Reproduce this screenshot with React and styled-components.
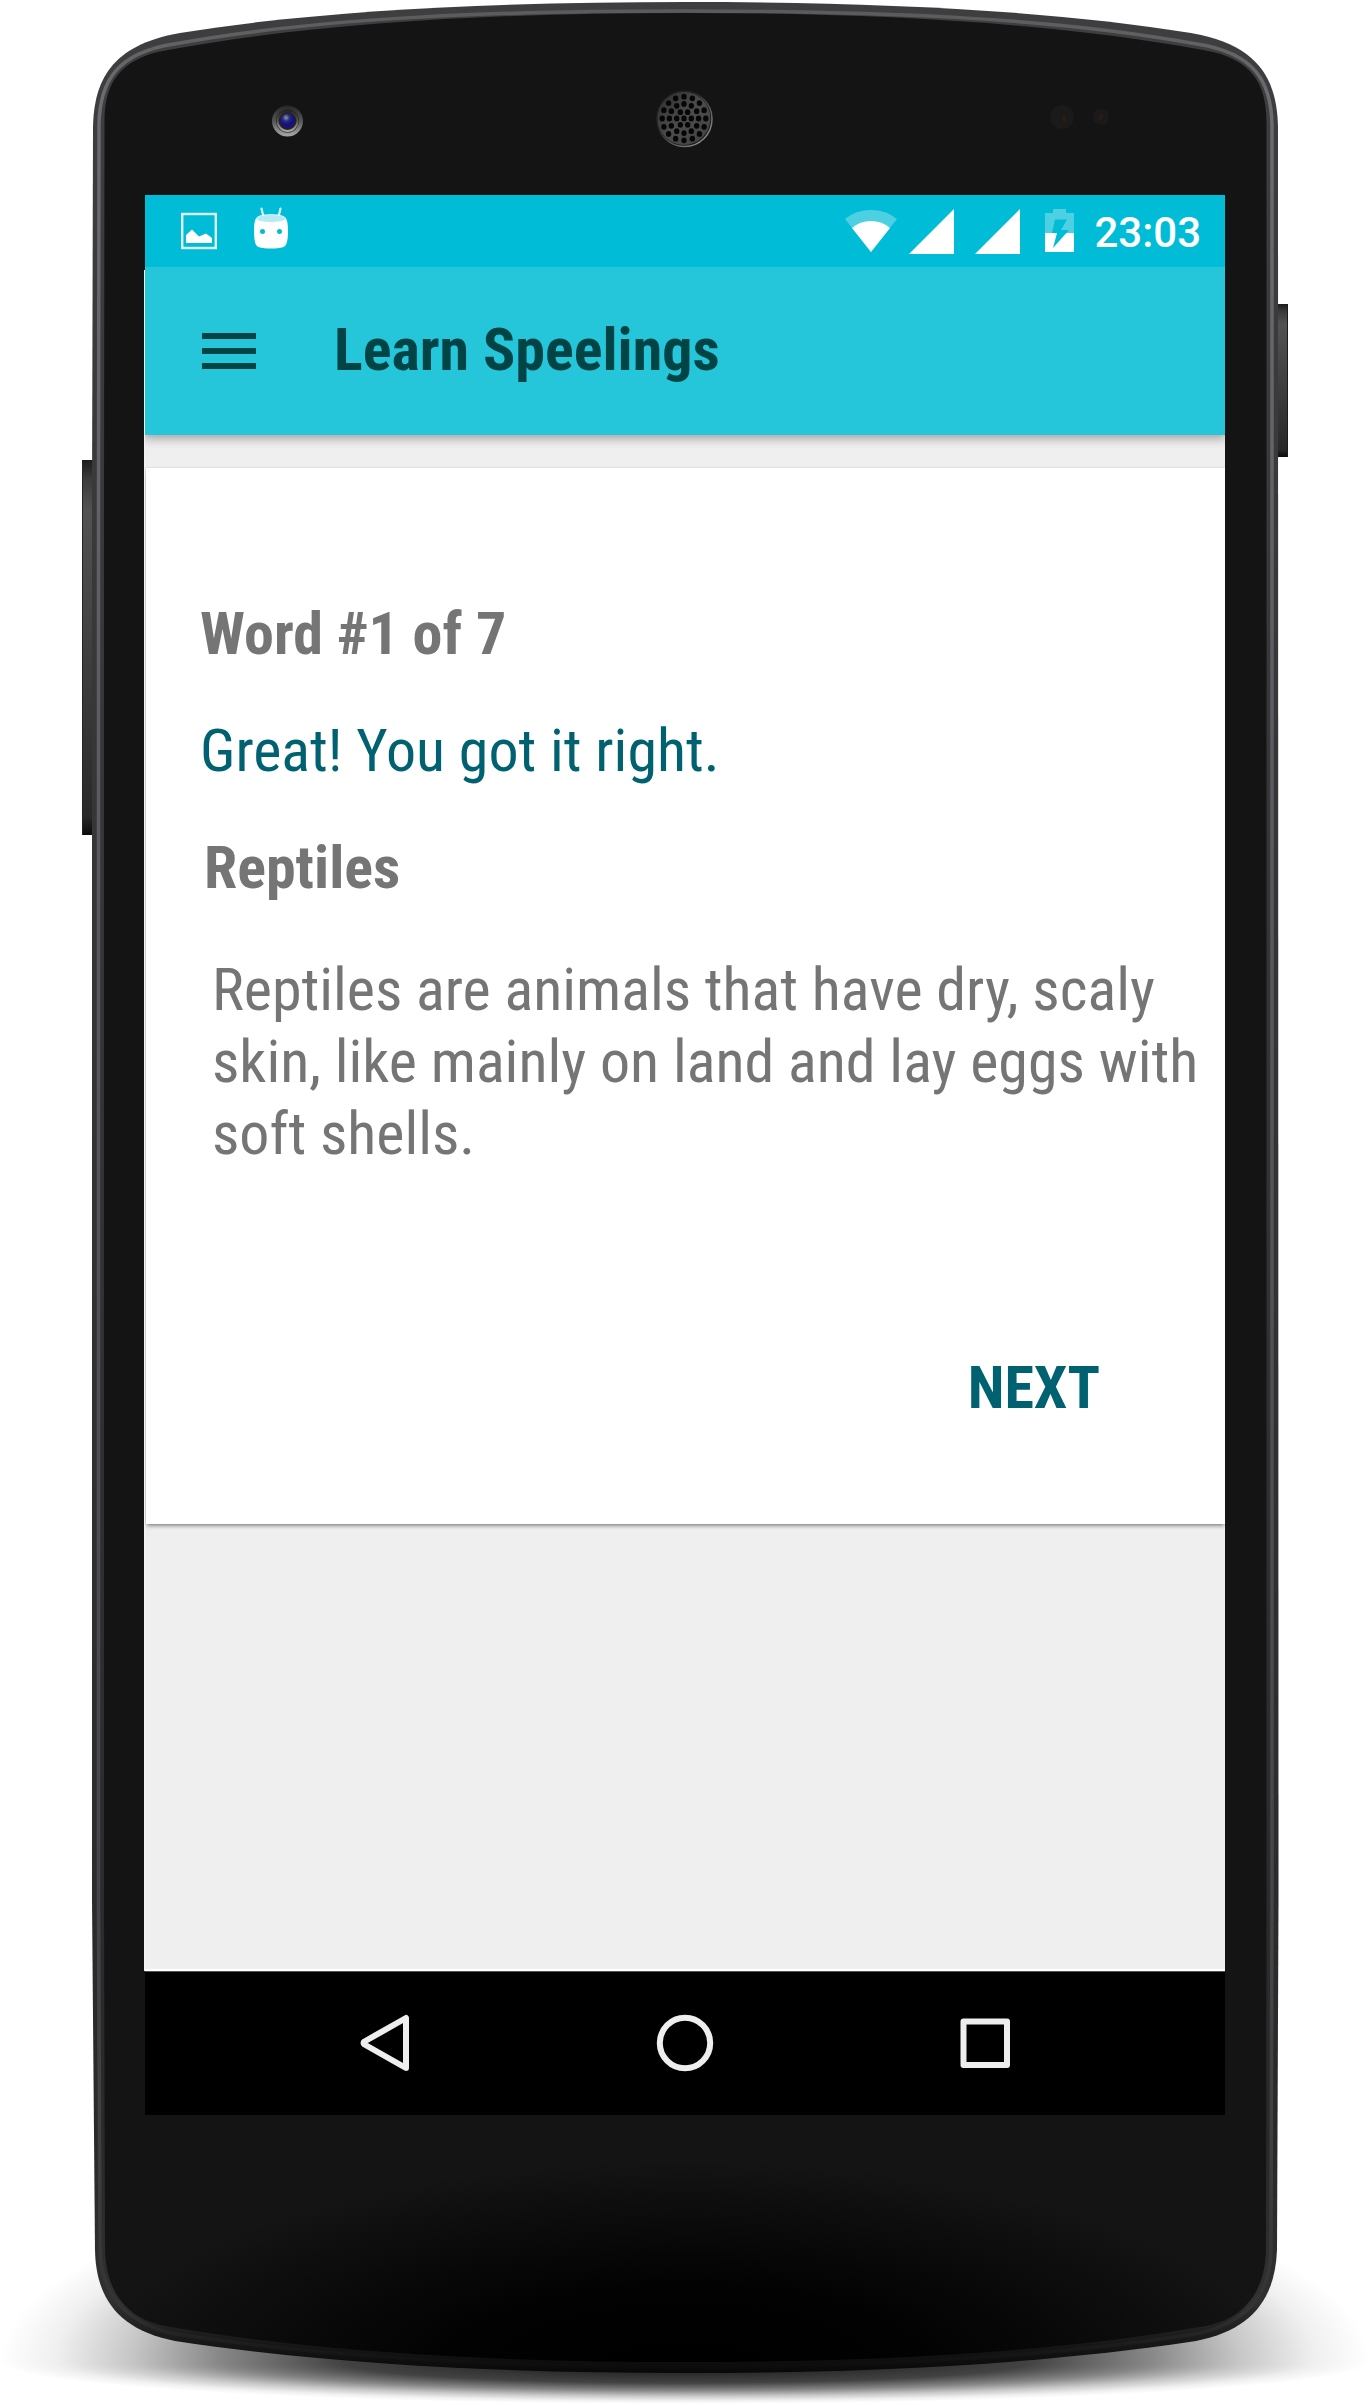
import React from "react";
import styled, { createGlobalStyle } from "styled-components";

const GlobalStyle = createGlobalStyle`
  *, *::before, *::after { box-sizing: border-box; }
  body { margin: 0; background: #fff; }
`;

const condensed = `"Roboto Condensed", Roboto, "Liberation Sans", sans-serif`;

const Stage = styled.div`
  position: relative;
  width: 1370px;
  height: 2405px;
  padding: 195px 145px 290px;
  overflow: hidden;
  background: #fff;
`;

const DeviceArt = styled.svg`
  position: absolute;
  inset: 0;
  width: 1370px;
  height: 2405px;
`;

const Screen = styled.main`
  position: relative;
  display: flex;
  flex-direction: column;
  width: 1080px;
  height: 1920px;
  background: #efefef;
`;

/* Thin light edge down the left of the display, below the status bar */
const ScreenEdge = styled.span`
  position: absolute;
  left: -1px;
  top: 75px;
  width: 1px;
  height: 1701px;
  background: #f4f4f4;
`;

const StatusBar = styled.header`
  display: flex;
  align-items: center;
  height: 72px;
  padding: 0 24px 0 36px;
  background: #00bcd7;
  color: #fff;
  svg { display: block; flex: none; }
`;

const Notifications = styled.div`
  display: flex;
  gap: 37px;
`;

const Indicators = styled.div`
  display: flex;
  align-items: center;
  margin-left: auto;
`;

const Icon = styled.svg`
  width: ${(p) => p.$w}px;
  height: ${(p) => p.$h}px;
  margin-right: ${(p) => p.$gap || 0}px;
`;

const Clock = styled.time`
  font: 500 42px/50px Roboto, "Liberation Sans", sans-serif;
  padding-top: 4px;
  height: 54px;
`;

const Toolbar = styled.div`
  position: relative;
  display: flex;
  align-items: center;
  gap: 78px;
  height: 168px;
  padding: 0 57px;
  background: #26c6da;
  color: #004446;
  box-shadow: 0 2px 10px 1px rgba(0, 0, 0, 0.36);
  clip-path: inset(0 0 -14px 0);
`;

const MenuButton = styled.button`
  display: flex;
  flex-direction: column;
  gap: 9px;
  width: 54px;
  padding: 0;
  border: 0;
  background: none;
  span { height: 6px; background: #004446; }
`;

const Title = styled.h1`
  margin: 0;
  font: 700 60px/72px ${condensed};
  padding-bottom: 3px;
`;

const Content = styled.section`
  flex: 1;
  padding-top: 33px;
  overflow: hidden;
  box-shadow: inset 0 -2px #fff;
`;

const Card = styled.article`
  display: flex;
  flex-direction: column;
  height: 1056px;
  margin-left: 1px;
  padding: 130px 0 0 54px;
  background: #fff;
  box-shadow: 0 3px 4px -1px rgba(0, 0, 0, 0.4), 0 0 2px rgba(0, 0, 0, 0.15);
`;

const Line = styled.p`
  margin: 0 0 45px;
  padding-left: ${(p) => p.$indent || 0}px;
  font: ${(p) => (p.$bold ? 700 : 400)} 60px/72px ${condensed};
  color: ${(p) => (p.$accent ? "#006270" : "#757575")};
  white-space: nowrap;
`;

const Description = styled.p`
  margin: 5px 0 0;
  padding-left: 12px;
  width: 1010px;
  font: 400 60px/72px ${condensed};
  color: #757575;
`;

const NextButton = styled.button`
  align-self: flex-end;
  margin: 182px 125px 0 0;
  padding: 0;
  border: 0;
  background: none;
  color: #006270;
  font: 700 60px/72px ${condensed};
`;

const NavBar = styled.nav`
  display: flex;
  align-items: center;
  justify-content: center;
  gap: 240px;
  height: 144px;
  padding-bottom: 2px;
  background: #000;
  border-top: 1px solid #555;
  svg { width: 60px; height: 60px; fill: none; stroke: #eee; stroke-width: 6; stroke-linejoin: round; }
`;

const OUTER =
  "M93 127C94 82 110 45 180 33C320 10 500 2 685.5 2C871 2 1051 10 1191 33C1261 45 1277 82 1278 127L1278.5 1900L1277 2250C1275 2300 1251 2330 1196 2341C1031 2366 851 2373 685.5 2373C520 2373 340 2366 175 2341C120 2330 96 2300 95 2250L92 1900L92 500Z";
const RIM =
  "M99 124C100 82 116 53 174 44C320 17 500 11 685.5 11C871 11 1051 17 1197 44C1255 53 1271 82 1272 124L1272 1900L1271 2250C1270 2295 1247 2321 1201 2333C1041 2359 851 2367 685.5 2367C520 2367 330 2359 170 2333C125 2321 101 2295 100 2250L98.5 1900L98.5 500Z";
const INNER =
  "M104.5 120C105 85 118 58 168 50C320 22 500 13 685.5 13C871 13 1051 22 1203 50C1253 58 1266 85 1266.5 120L1266.5 1900L1266 2250C1265 2290 1246 2318 1206 2326C1041 2355 851 2362 685.5 2362C520 2362 330 2355 165 2326C125 2318 106 2290 105 2250L104 1900L104 500Z";

const ring = (count, radius) =>
  Array.from({ length: count }, (_, i) => {
    const a = (i / count) * Math.PI * 2;
    return [684 + radius * Math.cos(a), 118.5 + radius * Math.sin(a)];
  });
const speakerHoles = [...ring(1, 0), ...ring(6, 7.3), ...ring(12, 14.6), ...ring(16, 21.8)];

function Device() {
  return (
    <DeviceArt viewBox="0 0 1370 2405" aria-hidden="true">
      <defs>
        <radialGradient id="shade">
          <stop offset="0" stopOpacity="0.88" />
          <stop offset="0.3" stopOpacity="0.82" />
          <stop offset="0.5" stopOpacity="0.74" />
          <stop offset="0.68" stopOpacity="0.47" />
          <stop offset="0.81" stopOpacity="0.22" />
          <stop offset="0.92" stopOpacity="0.06" />
          <stop offset="1" stopOpacity="0" />
        </radialGradient>
        <clipPath id="above"><rect y="2100" width="1370" height="262" /></clipPath>
        <clipPath id="below"><rect y="2362" width="1370" height="43" /></clipPath>
        <linearGradient id="edge" x1="0" y1="0" x2="0" y2="1">
          <stop offset="0" stopColor="#3e3e40" />
          <stop offset="0.6" stopColor="#303033" />
          <stop offset="0.9" stopColor="#29292a" />
          <stop offset="0.97" stopColor="#303030" />
          <stop offset="0.99" stopColor="#141414" />
          <stop offset="1" stopColor="#080808" />
        </linearGradient>
        <linearGradient id="rim" gradientUnits="userSpaceOnUse" x1="0" y1="0" x2="0" y2="2373">
          <stop offset="0" stopColor="#59595c" />
          <stop offset="0.04" stopColor="#6c6c70" />
          <stop offset="0.3" stopColor="#5c5c62" />
          <stop offset="0.7" stopColor="#4b4b4f" />
          <stop offset="0.9" stopColor="#3f4042" />
          <stop offset="0.975" stopColor="#333" />
          <stop offset="1" stopColor="#080808" />
        </linearGradient>
        <radialGradient id="glass" gradientUnits="userSpaceOnUse" cx="0" cy="0" r="1" gradientTransform="translate(685 2370) scale(600 210)">
          <stop offset="0" stopColor="#000" />
          <stop offset="0.4" stopColor="#020202" />
          <stop offset="0.75" stopColor="#0c0c0c" />
          <stop offset="1" stopColor="#141414" />
        </radialGradient>
        <linearGradient id="key" x1="0" y1="0" x2="0" y2="1">
          <stop offset="0" stopColor="#1c1c1c" />
          <stop offset="0.05" stopColor="#3b3b3b" />
          <stop offset="0.13" stopColor="#525252" />
          <stop offset="0.5" stopColor="#404040" />
          <stop offset="0.95" stopColor="#292929" />
          <stop offset="1" stopColor="#0b0b0b" />
        </linearGradient>
        <linearGradient id="lens" x1="0" y1="0" x2="0" y2="1">
          <stop offset="0" stopColor="#262626" />
          <stop offset="0.5" stopColor="#555" />
          <stop offset="1" stopColor="#aaa" />
        </linearGradient>
        <radialGradient id="iris" cx="0.4" cy="0.3">
          <stop offset="0" stopColor="#8a9bb0" />
          <stop offset="0.5" stopColor="#283070" />
          <stop offset="1" stopColor="#170c90" />
        </radialGradient>
        <linearGradient id="mesh" x1="0" y1="0" x2="1" y2="1">
          <stop offset="0" stopColor="#2c2c2c" />
          <stop offset="0.5" stopColor="#4c4c4c" />
          <stop offset="1" stopColor="#404040" />
        </linearGradient>
        <linearGradient id="meshRing" x1="0" y1="0" x2="1" y2="1">
          <stop offset="0.35" stopColor="#242424" />
          <stop offset="1" stopColor="#a0a0a0" />
        </linearGradient>
      </defs>

      <ellipse cx="685" cy="2362" rx="685" ry="205" fill="url(#shade)" clipPath="url(#above)" />
      <ellipse cx="685" cy="2362" rx="685" ry="42" fill="url(#shade)" clipPath="url(#below)" />

      <rect x="82" y="460" width="12" height="375" fill="url(#key)" />
      <path d="M82.5 460V835" stroke="#242424" />
      <rect x="1277" y="304" width="11" height="153" fill="url(#key)" />
      <path d="M1287.5 304V457" stroke="#1c1c1c" />

      <path d={OUTER} fill="url(#edge)" />
      <path d={RIM} fill="none" stroke="url(#rim)" strokeWidth="3.5" />
      <path d={INNER} fill="url(#glass)" />

      <circle cx="287.5" cy="121" r="15.5" fill="url(#lens)" />
      <circle cx="287.5" cy="121" r="11.5" fill="#222" />
      <circle cx="287.5" cy="121" r="10" fill="none" stroke="url(#lens)" strokeWidth="2" />
      <circle cx="287.5" cy="120.5" r="7" fill="url(#iris)" />

      <circle cx="684.5" cy="119" r="27.5" fill="none" stroke="url(#meshRing)" strokeWidth="1.5" />
      <circle cx="684" cy="118.5" r="26.5" fill="url(#mesh)" />
      {speakerHoles.map(([x, y], i) => (
        <ellipse key={i} cx={x} cy={y} rx="2.7" ry="2.9" fill="#060606" />
      ))}

      <circle cx="1062" cy="117" r="12" fill="#1a1a1a" />
      <ellipse cx="1064" cy="118.5" rx="1.5" ry="3.5" fill="#2f1c10" />
      <circle cx="1101" cy="117" r="8" fill="#1a1a1a" />
      <ellipse cx="1101" cy="117" rx="1.5" ry="3" fill="#2f1c10" />
    </DeviceArt>
  );
}

function StatusIcons() {
  return (
    <StatusBar>
      <Notifications>
        <Icon $w={36} $h={48} viewBox="0 0 36 48">
          <rect x="1.2" y="7" width="33.6" height="34" fill="none" stroke="#fff" strokeOpacity="0.88" strokeWidth="2.4" />
          <path fill="#fff" d="M5 36V28L11 22.500L18 29.500L25 26.500L31 31V36Z" />
        </Icon>
        <Icon $w={36} $h={48} viewBox="0 0 36 48">
          <path d="M7.500 1.500L9.500 10M26.500 1.500L24.500 10" stroke="#fff" strokeOpacity="0.85" strokeWidth="2.200" strokeLinecap="round" />
          <path fill="#fff" d="M4 9.500C8 6.500 26 6.500 30 9.500C33 11 34 16 34 23C34 33 33 39 29 40.300C23 42 11 42 5 40.300C1 39 0 33 0 23C0 16 1 11 4 9.500Z" />
          <ellipse cx="17" cy="11.500" rx="14.500" ry="3.500" fill="#b6ebf3" />
          <circle cx="8.500" cy="24.500" r="2.500" fill="#00bcd7" />
          <circle cx="25.500" cy="24.500" r="2.500" fill="#00bcd7" />
        </Icon>
      </Notifications>
      <Indicators>
        <Icon $w={52} $h={48} $gap={12} viewBox="0 0 52 48">
          <path fill="#4dd0e2" d="M26 45L0 12Q11 3 26 3T52 12Z" />
          <path fill="#fff" d="M26 45L7 21Q15 14 26 14T45 21Z" />
        </Icon>
        <Icon $w={45} $h={48} $gap={21} viewBox="0 0 45 48"><path fill="#fff" d="M45 2V47H0Z" /></Icon>
        <Icon $w={45} $h={48} $gap={25} viewBox="0 0 45 48"><path fill="#fff" d="M45 2V47H0Z" /></Icon>
        <Icon $w={29} $h={48} $gap={20} viewBox="0 0 29 48">
          <path fill="#4dd0e2" d="M8 2H21V6H29V26H0V6H8Z" />
          <path fill="#fff" d="M0 26H29V45H0Z" />
          <path fill="#00bcd7" d="M10 12.500H22L16 23H24L8 41L12 26H7Z" />
        </Icon>
        <Clock>23:03</Clock>
      </Indicators>
    </StatusBar>
  );
}

export default function App() {
  return (
    <Stage>
      <GlobalStyle />
      <Device />
      <Screen>
        <ScreenEdge />
        <StatusIcons />
        <Toolbar>
          <MenuButton aria-label="Menu"><span /><span /><span /></MenuButton>
          <Title>Learn Speelings</Title>
        </Toolbar>
        <Content>
          <Card>
            <Line $bold>Word #1 of 7</Line>
            <Line $accent>Great! You got it right.</Line>
            <Line $bold $indent={4}>Reptiles</Line>
            <Description>
              Reptiles are animals that have dry, scaly skin, like mainly on land and lay eggs with soft shells.
            </Description>
            <NextButton>NEXT</NextButton>
          </Card>
        </Content>
        <NavBar>
          <svg viewBox="0 0 60 60"><path d="M51 5V55L9.500 31.500Q7.500 30 9.500 28.500Z" /></svg>
          <svg viewBox="0 0 60 60"><circle cx="30" cy="30" r="25.200" /></svg>
          <svg viewBox="0 0 60 60"><rect x="8.500" y="8.500" width="43.500" height="43.500" /></svg>
        </NavBar>
      </Screen>
    </Stage>
  );
}
